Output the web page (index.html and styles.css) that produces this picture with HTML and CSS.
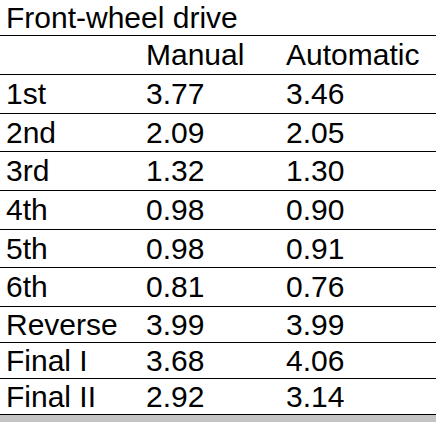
FILE: index.html
```html
<!DOCTYPE html>
<html lang="en">

<head>
  <meta charset="UTF-8" />
  <title>Gear ratios</title>
  <link rel="stylesheet" href="styles.css">
</head>

<body>
  <div class="caption">Front-wheel drive</div>

  <table class="ratios">
    <thead>
      <tr class="head">
        <th></th>
        <th>Manual</th>
        <th>Automatic</th>
      </tr>
    </thead>
    <tbody>
      <tr class="gear"><td>1st</td><td>3.77</td><td>3.46</td></tr>
      <tr class="gear"><td>2nd</td><td>2.09</td><td>2.05</td></tr>
      <tr class="gear"><td>3rd</td><td>1.32</td><td>1.30</td></tr>
      <tr class="gear"><td>4th</td><td>0.98</td><td>0.90</td></tr>
      <tr class="gear"><td>5th</td><td>0.98</td><td>0.91</td></tr>
      <tr class="gear"><td>6th</td><td>0.81</td><td>0.76</td></tr>
      <tr class="final"><td>Reverse</td><td>3.99</td><td>3.99</td></tr>
      <tr class="final"><td>Final I</td><td>3.68</td><td>4.06</td></tr>
      <tr class="final"><td>Final II</td><td>2.92</td><td>3.14</td></tr>
    </tbody>
  </table>

  <div class="band"></div>
</body>

</html>
```

FILE: styles.css
```css
body {
  margin: 0;
  background-color: #ffffff;
  color: #000000;
  font-family: "Liberation Sans", Arial, sans-serif;
  font-size: 30px;
}

.caption {
  line-height: 35px;
  padding-left: 6px;
  border-bottom: 1px solid #000000;
}

.ratios {
  width: 100%;
  border-collapse: separate;
  border-spacing: 0;
  table-layout: fixed;
}

.ratios th,
.ratios td {
  padding: 0 0 0 6px;
  text-align: left;
  font-weight: normal;
  border-bottom: 1px solid #000000;
  white-space: nowrap;
}

.ratios th:nth-child(1),
.ratios td:nth-child(1) {
  width: 134px;
}

.ratios th:nth-child(2),
.ratios td:nth-child(2) {
  width: 134px;
}

.head th {
  line-height: 38px;
}

.gear td {
  line-height: 37.67px;
}

.final td {
  line-height: 35px;
}

.band {
  height: 8px;
  background-color: #c4c4c4;
}
```
